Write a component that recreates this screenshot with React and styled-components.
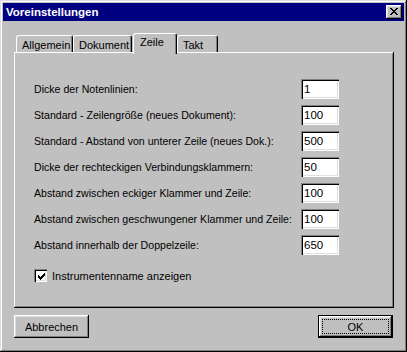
import styled, { createGlobalStyle } from "styled-components";

const Global = createGlobalStyle`
    body {
        margin: 0;
        background: #c0c0c0;
    }
    * {
        box-sizing: border-box;
    }
`;

const raised = `
    box-shadow: inset -1px -1px #000, inset 1px 1px #fff,
        inset -2px -2px #808080, inset 2px 2px #dfdfdf;
`;

const Window = styled.div`
    width: 407px;
    height: 352px;
    padding: 3px;
    background: #c0c0c0;
    box-shadow: inset -1px -1px #000, inset 1px 1px #dfdfdf,
        inset -2px -2px #808080, inset 2px 2px #fff;
    font-family: "Liberation Sans", Arial, sans-serif;
    font-size: 10.6px;
    color: #000;
    white-space: nowrap;
`;

const TitleBar = styled.div`
    height: 18px;
    background: #000080;
    color: #fff;
    font-weight: bold;
    font-size: 11.5px;
    display: flex;
    align-items: center;
    justify-content: space-between;
    padding: 0 2px 0 3px;
`;

const CloseButton = styled.div`
    width: 16px;
    height: 14px;
    background: #c0c0c0;
    ${raised}
    display: flex;
    align-items: center;
    justify-content: center;
    padding: 0 1px 1px 0;
`;

const Content = styled.div`
    padding: 12px 0 0 11px;
`;

const TabStrip = styled.div`
    display: flex;
    align-items: flex-end;
    height: 21px;
    margin-bottom: -2px;
    padding-left: 2px;
    position: relative;
    z-index: 1;
`;

const Tab = styled.div`
    width: ${(p) => p.$w}px;
    height: ${(p) => (p.$active ? 21 : 17)}px;
    margin-bottom: ${(p) => (p.$active ? 0 : 2)}px;
    margin-right: ${(p) => p.$mr || 0}px;
    background: #c0c0c0;
    border-top: 1px solid #fff;
    border-left: 1px solid #fff;
    border-right: 1px solid #000;
    border-radius: 3px 3px 0 0;
    box-shadow: inset -1px 0 #808080;
    font-size: 11px;
    padding: ${(p) => (p.$active ? "2px 0 0 6px" : "3px 0 0 5px")};
`;

const Panel = styled.div`
    width: 380px;
    height: 256px;
    box-shadow: inset -1px -1px #000, inset 1px 1px #fff,
        inset -2px -2px #808080;
    padding: 27px 0 0 20px;
    display: flex;
    flex-direction: column;
    gap: 6px;
`;

const Row = styled.div`
    width: 305px;
    height: 20px;
    display: flex;
    align-items: center;
    justify-content: space-between;
`;

const Field = styled.div`
    width: 38px;
    height: 20px;
    background: #fff;
    box-shadow: inset 1px 1px #808080, inset 2px 2px #000,
        inset -1px -1px #fff, inset -2px -2px #dfdfdf;
    padding: 0 0 0 3px;
    display: flex;
    align-items: center;
    font-size: 11.5px;
`;

const CheckRow = styled.label`
    display: flex;
    align-items: center;
    gap: 5px;
    margin-top: 8px;
    height: 13px;
    font-size: 11px;
`;

const CheckBox = styled.span`
    width: 13px;
    height: 13px;
    background: #fff;
    box-shadow: inset 1px 1px #808080, inset 2px 2px #000,
        inset -1px -1px #fff, inset -2px -2px #dfdfdf;
    display: flex;
    align-items: center;
    justify-content: center;
    padding: 1px 0 0 1px;
`;

const ButtonBar = styled.div`
    width: 379px;
    display: flex;
    justify-content: space-between;
    margin-top: 7px;
`;

const Button = styled.div`
    width: 75px;
    height: 23px;
    display: flex;
    align-items: center;
    justify-content: center;
    position: relative;
    font-size: 11px;
    ${(p) =>
        p.$default
            ? `box-shadow: inset 0 0 0 1px #000, inset -2px -2px #000, inset 2px 2px #fff,
                inset -3px -3px #808080, inset 3px 3px #dfdfdf;`
            : raised}
`;

const Focus = styled.span`
    position: absolute;
    inset: 4px;
    border: 1px dotted #000;
`;

function CloseGlyph() {
    const px = [
        [0, 0], [1, 0], [6, 0], [7, 0],
        [1, 1], [2, 1], [5, 1], [6, 1],
        [2, 2], [3, 2], [4, 2], [5, 2],
        [3, 3], [4, 3],
        [2, 4], [3, 4], [4, 4], [5, 4],
        [1, 5], [2, 5], [5, 5], [6, 5],
        [0, 6], [1, 6], [6, 6], [7, 6],
    ];
    return (
        <svg width="8" height="7" shapeRendering="crispEdges">
            {px.map(([x, y]) => <rect key={x + "-" + y} x={x} y={y} width="1" height="1" fill="#000" />)}
        </svg>
    );
}

function CheckGlyph() {
    const rows = ["......X", ".....XX", "X...XXX", "XX.XXX.", "XXXXX..", ".XXX...", "..X...."];
    return (
        <svg width="7" height="7" shapeRendering="crispEdges">
            {rows.flatMap((r, y) =>
                r.split("").map((c, x) =>
                    c === "X" ? <rect key={x + "-" + y} x={x} y={y} width="1" height="1" fill="#000" /> : null
                )
            )}
        </svg>
    );
}

const settings = [
    ["Dicke der Notenlinien:", "1"],
    ["Standard - Zeilengröße (neues Dokument):", "100"],
    ["Standard - Abstand von unterer Zeile (neues Dok.):", "500"],
    ["Dicke der rechteckigen Verbindungsklammern:", "50"],
    ["Abstand zwischen eckiger Klammer und Zeile:", "100"],
    ["Abstand zwischen geschwungener Klammer und Zeile:", "100"],
    ["Abstand innerhalb der Doppelzeile:", "650"],
];

export default function App() {
    return <>
        <Global />
        <Window>
            <TitleBar>
                <span>Voreinstellungen</span>
                <CloseButton><CloseGlyph /></CloseButton>
            </TitleBar>
            <Content>
                <TabStrip>
                    <Tab $w={57}>Allgemein</Tab>
                    <Tab $w={59} $mr={1}>Dokument</Tab>
                    <Tab $w={44} $active>Zeile</Tab>
                    <Tab $w={41}>Takt</Tab>
                </TabStrip>
                <Panel>
                    {settings.map(([label, value]) => (
                        <Row key={label}>
                            <span>{label}</span>
                            <Field>{value}</Field>
                        </Row>
                    ))}
                    <CheckRow>
                        <CheckBox><CheckGlyph /></CheckBox>
                        Instrumentenname anzeigen
                    </CheckRow>
                </Panel>
                <ButtonBar>
                    <Button>Abbrechen</Button>
                    <Button $default><Focus />OK</Button>
                </ButtonBar>
            </Content>
        </Window>
    </>;
}
